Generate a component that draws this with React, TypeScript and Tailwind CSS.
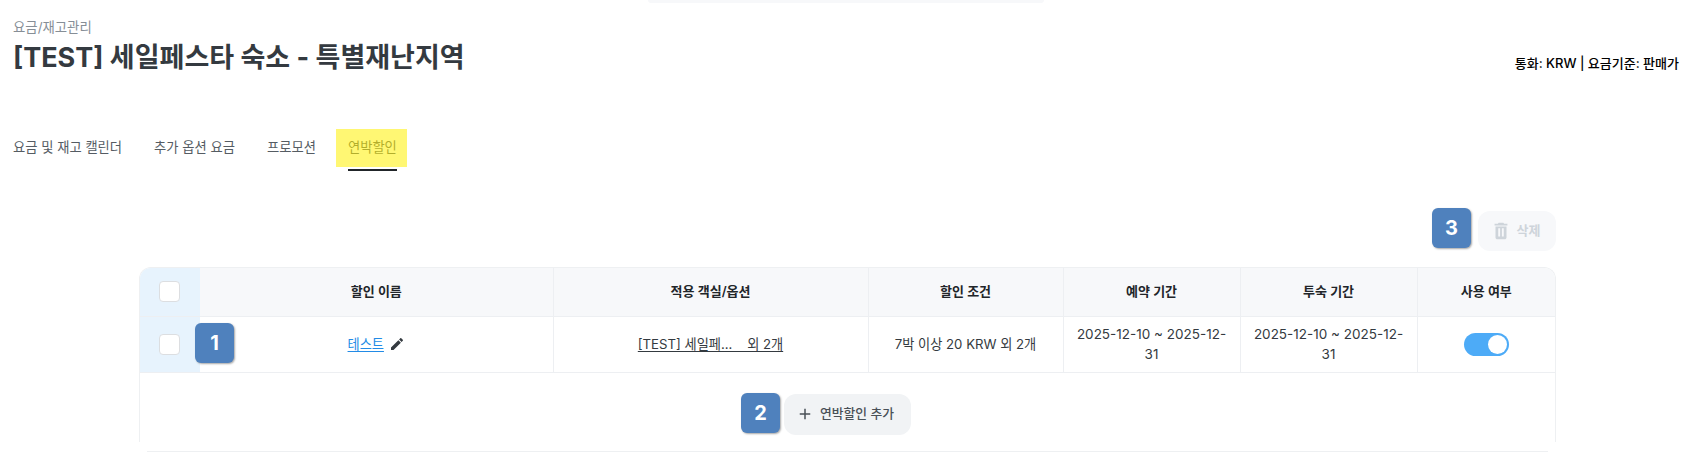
const font = { fontFamily: 'Inter, "Noto Sans CJK KR", sans-serif' };

function Badge({ n, className }: { n: number; className: string }) {
  return (
    <div className={`absolute z-10 flex h-10 w-[39px] items-center justify-center rounded-[6px] bg-[#4f81bd] text-[20px] font-bold text-white shadow-[1px_1px_2px_rgba(0,0,0,0.35)] ${className}`}>
      {n}
    </div>
  );
}

function Check() {
  return <div className="-translate-x-px h-[21px] w-[21px] rounded-[4px] border border-[#dcdee1] bg-white" />;
}

function Th({ children }: { children: React.ReactNode }) {
  return <th className="border-r border-[#edeff2] text-[13px] font-semibold text-[#212529] last:border-r-0">{children}</th>;
}

function Td({ children, className = "text-[13.2px]" }: { children: React.ReactNode; className?: string }) {
  return <td className={`border-r border-[#edeff2] px-3 text-center leading-[20px] text-[#343a40] last:border-r-0 ${className}`}>{children}</td>;
}

export default function App() {
  return (
    <div className="relative h-[461px] w-[1687px] overflow-hidden bg-white" style={font}>
      <div className="ml-[648px] h-[3px] w-[396px] rounded-b-[8px] bg-[#f7f8fa]" />

      <div className="flex items-start justify-between pl-[13px] pr-[8px] pt-[15px]">
        <div>
          <div className="text-[13.4px] leading-[18px] text-[#868e96]">요금/재고관리</div>
          <h1 className="mt-[4px] text-[27px] font-bold leading-[36px] text-[#343a40]">[TEST] 세일페스타 숙소 - 특별재난지역</h1>
        </div>
        <div className="mt-[36px] text-[13px] font-medium leading-[18px] text-black">통화: KRW | 요금기준: 판매가</div>
      </div>

      <nav className="relative ml-[13px] mt-[53px] flex h-[42px] gap-[32px] text-[13.3px] text-[#555c63]">
        <span className="pt-[8px] leading-[20px]">요금 및 재고 캘린더</span>
        <span className="pt-[8px] leading-[20px]">추가 옵션 요금</span>
        <span className="pt-[8px] leading-[20px]">프로모션</span>
        <span className="border-b-2 border-[#212529] pt-[8px] pb-[12px] leading-[20px]">연박할인</span>
        <div className="absolute left-[323px] top-0 h-[38px] w-[71px] bg-[#fff000]/55" />
      </nav>

      <div className="relative ml-[139px] mt-[40px] w-[1417px]">
        <div className="flex justify-end">
          <button className="flex h-10 w-[78px] items-center justify-center gap-[5px] rounded-[12px] bg-[#f7f8fa] pr-[4px] text-[13px] font-semibold text-[#ced4da]">
            <svg width="22" height="22" viewBox="0 0 24 24" fill="#ced4da">
              <path d="M6 19c0 1.1.9 2 2 2h8c1.1 0 2-.9 2-2V7H6v12zM19 4h-3.5l-1-1h-5l-1 1H5v2h14V4z" />
              <rect x="9" y="9" width="2" height="9" fill="#f7f8fa" />
              <rect x="13" y="9" width="2" height="9" fill="#f7f8fa" />
            </svg>
            삭제
          </button>
        </div>
        <Badge n={3} className="left-[1293px] top-[-3px]" />

        <div className="relative mt-4 overflow-hidden rounded-t-[12px] border-x border-t border-[#eef0f2]">
          <table className="w-full table-fixed border-collapse">
            <colgroup>
              <col className="w-[60px]" />
              <col className="w-[353px]" />
              <col className="w-[315px]" />
              <col className="w-[195px]" />
              <col className="w-[177px]" />
              <col className="w-[177px]" />
              <col />
            </colgroup>
            <thead>
              <tr className="h-[48px] border-b border-[#edeff2] bg-[#f7f8fa]">
                <th className="bg-[#e7f3fd]"><div className="flex justify-center"><Check /></div></th>
                <Th>할인 이름</Th>
                <Th>적용 객실/옵션</Th>
                <Th>할인 조건</Th>
                <Th>예약 기간</Th>
                <Th>투숙 기간</Th>
                <Th>사용 여부</Th>
              </tr>
            </thead>
            <tbody>
              <tr className="h-[56px] border-b border-[#edeff2]">
                <td className="bg-[#e7f3fd]"><div className="flex justify-center"><Check /></div></td>
                <Td>
                  <span className="inline-flex items-center gap-[5px]">
                    <span className="text-[#228be6] underline underline-offset-2">테스트</span>
                    <svg width="16" height="16" viewBox="0 0 24 24" fill="#343a40">
                      <path d="M3 17.25V21h3.75L17.81 9.94l-3.75-3.75L3 17.25zM20.71 7.04c.39-.39.39-1.02 0-1.41l-2.34-2.34c-.39-.39-1.02-.39-1.41 0l-1.83 1.83 3.75 3.75 1.83-1.83z" />
                    </svg>
                  </span>
                </Td>
                <Td><span className="whitespace-pre underline underline-offset-2">[TEST] 세일페...    외 2개</span></Td>
                <Td>7박 이상 20 KRW 외 2개</Td>
                <Td className="text-[13.5px]">2025-12-10 ~ 2025-12-31</Td>
                <Td className="text-[13.5px]">2025-12-10 ~ 2025-12-31</Td>
                <Td>
                  <span className="relative mx-auto block h-[23px] w-[45px] rounded-full bg-[#4dabf7]">
                    <span className="absolute right-[2px] top-[2px] h-[19px] w-[19px] rounded-full bg-white" />
                  </span>
                </Td>
              </tr>
            </tbody>
          </table>
          <div className="flex h-[69px] items-start justify-center pt-[21px]">
            <button className="flex h-[41px] w-[127px] items-center gap-[6px] rounded-[12px] bg-[#f1f3f5] pl-[12px] text-[12.8px] font-medium text-[#495057]">
              <svg width="18" height="18" viewBox="0 0 24 24" fill="none" stroke="#495057" strokeWidth="2">
                <path d="M12 5v14M5 12h14" />
              </svg>
              연박할인 추가
            </button>
          </div>
          <Badge n={1} className="left-[55px] top-[55px]" />
          <Badge n={2} className="left-[601px] top-[125px]" />
        </div>
        <div className="mx-2 mt-[9px] h-px bg-[#eef0f2]" />
      </div>
    </div>
  );
}
